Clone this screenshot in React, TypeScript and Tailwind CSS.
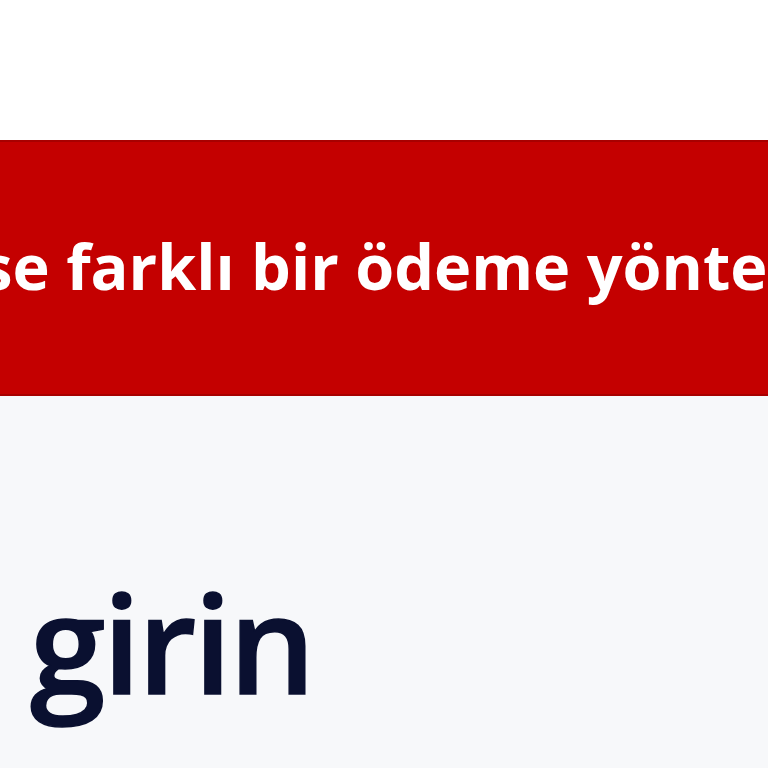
export default function App() {
  return (
    <div className="w-[768px] h-[768px] overflow-hidden flex flex-col bg-[#f7f8fa]" style={{ fontFamily: '"Open Sans", "Noto Sans", sans-serif' }}>
      <div className="h-[140px] bg-white shrink-0" />
      <div className="h-[256px] shrink-0 bg-[#c40000] border-y-2 border-[#a80000] flex items-center overflow-hidden">
        <div className="whitespace-nowrap font-bold text-white text-[63px] leading-none -ml-[38px] mt-[-6px]">
          ise farklı bir ödeme yöntemi seçin
        </div>
      </div>
      <div className="flex-1 flex items-start overflow-hidden">
        <div className="whitespace-nowrap font-semibold text-[#0a1030] text-[136px] leading-none tracking-[-0.02em] mt-[178px] ml-[30px]" style={{ WebkitTextStroke: '1.5px #0a1030' }}>
          girin
        </div>
      </div>
    </div>
  );
}
